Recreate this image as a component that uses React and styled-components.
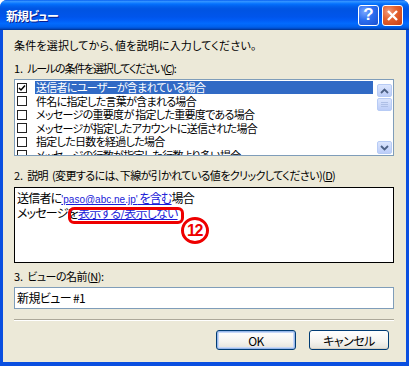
import React from "react";
import styled, { createGlobalStyle } from "styled-components";

const Global = createGlobalStyle`
  html, body { margin: 0; padding: 0; background: #fff; }
  body { font-family: "Noto Sans CJK JP", "Liberation Sans", sans-serif; font-size: 11px; }
  * { box-sizing: border-box; }
`;

const Window = styled.div`
  width: 409px;
  height: 366px;
  display: flex;
  flex-direction: column;
  background: #0a4fe0;
  border-radius: 7px 7px 0 0;
  overflow: hidden;
`;

const TitleBar = styled.div`
  height: 30px;
  flex: none;
  display: flex;
  align-items: center;
  padding: 0 6px 0 6px;
  background: linear-gradient(to bottom, #0058ee 0%, #3593ff 4%, #288eff 7%, #127dff 10%, #036ffc 14%, #0262ee 20%, #0057e5 28%, #0054e3 34%, #0055eb 56%, #005bf5 66%, #026afe 78%, #0062ef 88%, #0052d6 94%, #0040ab 97%, #003092 100%);
`;

const Title = styled.div`
  flex: 1;
  color: #fff;
  font-weight: bold;
  font-size: 12px;
  font-feature-settings: "palt";
  text-shadow: 1px 1px 0 #0a1e8c;
  letter-spacing: -1px;
`;

const CaptionButton = styled.div`
  width: 21px;
  height: 21px;
  margin-left: ${(p) => (p.$gap ? "3px" : "0")};
  border: 1px solid #fff;
  border-radius: 3px;
  display: flex;
  align-items: center;
  justify-content: center;
  color: #fff;
  font-family: "Liberation Sans", sans-serif;
  font-weight: bold;
  font-size: 17px;
  background: ${(p) =>
    p.$close
      ? "radial-gradient(circle at 30% 30%, #f09b7f 0%, #e5632f 40%, #c93c12 100%)"
      : "radial-gradient(circle at 30% 30%, #7aa6ff 0%, #2c6ef0 45%, #1a4fd0 100%)"};
`;

const Frame = styled.div`
  flex: 1;
  display: flex;
  flex-direction: column;
  margin: 0 3px 4px 3px;
  background: #ece9d8;
  padding: 0 12px 0 11px;
  font-feature-settings: "palt";
  color: #000;
`;

const Text = styled.div`
  line-height: 14px;
  height: 14px;
  margin-top: ${(p) => p.$mt || 0}px;
  white-space: nowrap;
  letter-spacing: ${(p) => p.$ls || 0}px;
`;

const Num = styled.span`
  margin-right: 4px;
  letter-spacing: 0;
`;

const Gap = styled.span`
  display: inline-block;
  width: 4px;
`;

const ListBox = styled.div`
  margin-top: 4px;
  height: 77px;
  border: 1px solid #7f9db9;
  background: #fff;
  display: flex;
  overflow: hidden;
`;

const Rows = styled.div`
  flex: 1;
  padding: 1px 4px 0 1px;
  overflow: hidden;
`;

const Row = styled.div`
  display: flex;
  align-items: center;
  height: 13.5px;
  white-space: nowrap;
`;

const Check = styled.span`
  width: 10px;
  height: 10px;
  flex: none;
  border: 1px solid #222;
  background: #fff;
  margin: 0 8px 0 1px;
  display: flex;
  align-items: center;
  justify-content: center;
`;

const RowLabel = styled.span`
  flex: 1;
  height: 13px;
  line-height: 13px;
  padding-left: 1px;
  letter-spacing: -0.7px;
  background: ${(p) => (p.$sel ? "#316ac5" : "transparent")};
  color: ${(p) => (p.$sel ? "#fff" : "#000")};
`;

const ScrollBar = styled.div`
  width: 16px;
  flex: none;
  display: flex;
  flex-direction: column;
  padding: 4px 1px 1px 0;
  background: #fff;
`;

const ScrollBtn = styled.div`
  height: 13px;
  width: 15px;
  border: 1px solid #b7cbf5;
  border-radius: 2px;
  background: linear-gradient(to bottom, #dbe5fd, #bccdf8);
  display: flex;
  align-items: center;
  justify-content: center;
  margin-top: ${(p) => (p.$bottom ? "auto" : p.$mt || 0)};
`;

const Desc = styled.div`
  position: relative;
  margin-top: 5px;
  height: 76px;
  border: 1px solid #000;
  background: #fff;
  padding: 2px 2px;
`;

const DescLine = styled.div`
  line-height: 15px;
  height: 15px;
  white-space: nowrap;
  font-size: 12px;
  letter-spacing: -0.8px;
`;

const Link = styled.span`
  color: #1a1ad8;
  text-decoration: underline;
`;

const Mail = styled.span`
  font-family: "Liberation Sans", sans-serif;
  font-size: 10px;
  letter-spacing: 0;
`;

const Mark = styled.div`
  position: absolute;
  left: 53px;
  top: 19px;
  width: 116px;
  height: 17px;
  border: 3px solid #ee0000;
  border-radius: 6px;
`;

const Badge = styled.div`
  position: absolute;
  left: 166px;
  top: 29px;
  width: 28px;
  height: 27px;
  border: 3px solid #ee0000;
  border-radius: 50%;
  background: #fff;
  color: #ee0000;
  font-family: "Liberation Sans", sans-serif;
  font-weight: bold;
  font-size: 16px;
  letter-spacing: -1.5px;
  padding-right: 1px;
  display: flex;
  align-items: center;
  justify-content: center;
`;

const Input = styled.div`
  margin-top: 4px;
  height: 22px;
  border: 1px solid #7f9db9;
  background: #fff;
  padding: 0 2px;
  line-height: 20px;
  font-size: 12px;
  letter-spacing: -0.6px;
`;

const Separator = styled.div`
  margin-top: 10px;
  height: 2px;
  border-top: 1px solid #aca899;
  border-bottom: 1px solid #fff;
`;

const ButtonRow = styled.div`
  margin-top: 9px;
  display: flex;
  justify-content: flex-end;
  gap: 13px;
  padding-right: 5px;
`;

const Button = styled.div`
  width: 80px;
  flex: none;
  height: 20px;
  border: 1px solid #003c74;
  border-radius: 3px;
  background: linear-gradient(to bottom, #ffffff 0%, #f4f3ee 60%, #e3e2da 100%);
  box-shadow: ${(p) => (p.$def ? "inset 0 0 0 1px #98b8ea, inset 0 0 0 2px #c6d7f7" : "inset 0 -1px 0 #d6d0c5")};
  display: flex;
  align-items: center;
  justify-content: center;
  font-size: 12px;
  letter-spacing: -0.5px;
`;

const items = [
  "送信者にユーザーが含まれている場合",
  "件名に指定した言葉が含まれる場合",
  "メッセージの重要度が 指定した重要度である場合",
  "メッセージが指定したアカウントに送信された場合",
  "指定した日数を経過した場合",
  "メッセージの行数が指定した行数より多い場合",
];

const Arrow = ({ up }) => (
  <svg width="9" height="6" viewBox="0 0 9 6">
    <path
      d={up ? "M1 5 L4.5 1.5 L8 5" : "M1 1 L4.5 4.5 L8 1"}
      fill="none"
      stroke="#4d6185"
      strokeWidth="1.8"
    />
  </svg>
);

export default function App() {
  return (
    <>
      <Global />
      <Window>
        <TitleBar>
          <Title>新規ビュー</Title>
          <CaptionButton>?</CaptionButton>
          <CaptionButton $close $gap>
            <svg width="13" height="13" viewBox="0 0 13 13">
              <path d="M2 2 L11 11 M11 2 L2 11" stroke="#fff" strokeWidth="2.4" />
            </svg>
          </CaptionButton>
        </TitleBar>
        <Frame>
          <Text $mt={8} $ls={0.2}>条件を選択してから、値を説明に入力してください。</Text>
          <Text $mt={9} $ls={-1.2}>
            <Num>1.</Num>ルールの条件を選択してください(<u>C</u>):
          </Text>
          <ListBox>
            <Rows>
              {items.map((t, i) => (
                <Row key={i}>
                  <Check>
                    {i === 0 && (
                      <svg width="8" height="8" viewBox="0 0 8 8">
                        <path d="M1 4 L3 6 L7 1.5" fill="none" stroke="#000" strokeWidth="1.5" />
                      </svg>
                    )}
                  </Check>
                  <RowLabel $sel={i === 0}>{t}</RowLabel>
                </Row>
              ))}
            </Rows>
            <ScrollBar>
              <ScrollBtn>
                <Arrow up />
              </ScrollBtn>
              <ScrollBtn $mt="1px">
                <svg width="7" height="7" viewBox="0 0 7 7">
                  <path d="M0 1.5 H7 M0 3.5 H7 M0 5.5 H7" stroke="#aebfe6" strokeWidth="1" />
                </svg>
              </ScrollBtn>
              <ScrollBtn $bottom>
                <Arrow />
              </ScrollBtn>
            </ScrollBar>
          </ListBox>
          <Text $mt={12} $ls={-0.6}>
            <Num>2.</Num>説明<Gap />(変更するには、下線が引かれている値をクリックしてください)(<u>D</u>)
          </Text>
          <Desc>
            <DescLine>
              送信者に
              <Link>
                <Mail>'paso@abc.ne.jp'</Mail> を含む
              </Link>
              場合
            </DescLine>
            <DescLine>
              メッセージを<Link>表示する/表示しない</Link>
            </DescLine>
            <Mark />
            <Badge>12</Badge>
          </Desc>
          <Text $mt={6} $ls={-0.5}>
            <Num>3.</Num>ビューの名前(<u>N</u>):
          </Text>
          <Input>新規ビュー #1</Input>
          <Separator />
          <ButtonRow>
            <Button $def>OK</Button>
            <Button>キャンセル</Button>
          </ButtonRow>
        </Frame>
      </Window>
    </>
  );
}
